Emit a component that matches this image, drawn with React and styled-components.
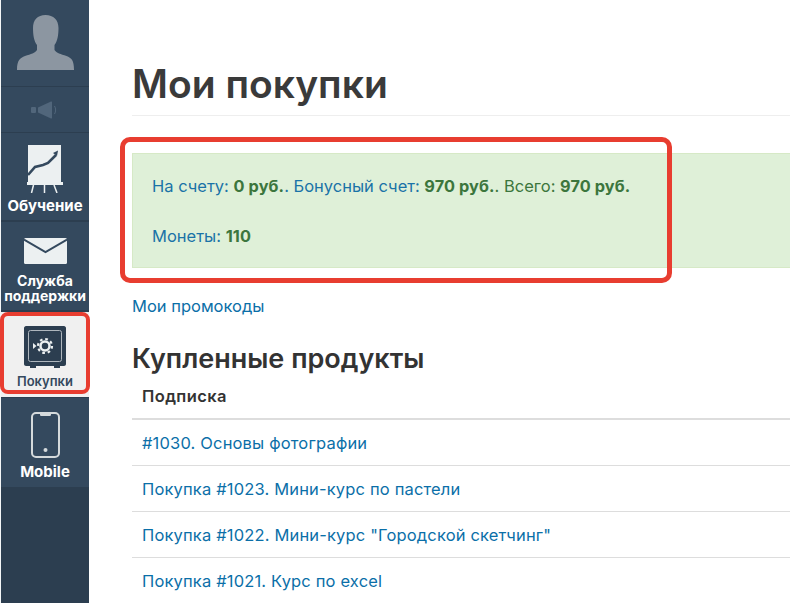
import React from "react";
import styled, { createGlobalStyle } from "styled-components";

const Global = createGlobalStyle`
  html, body { margin: 0; padding: 0; background: #fff; overflow: hidden; }
  body { font-family: Inter, "Noto Sans", sans-serif; font-size: 16px; color: #333; }
`;

const Page = styled.div`
  display: flex;
  width: 790px;
  height: 603px;
  overflow: hidden;
`;

const Sidebar = styled.nav`
  width: 89px;
  flex: none;
  box-sizing: border-box;
  border-left: 1px solid #f4f6f7;
  background: #2c3e50;
  display: flex;
  flex-direction: column;
`;

const AvatarCell = styled.div`
  height: 87px;
  background: #34495e;
  border-bottom: 1px solid #2c3e50;
  display: flex;
  align-items: flex-start;
  justify-content: center;
  padding-top: 15px;
  box-sizing: border-box;
`;

const SoundCell = styled.div`
  height: 46px;
  background: #34495e;
  border-bottom: 1px solid #2c3e50;
  box-sizing: border-box;
  display: flex;
  align-items: center;
  justify-content: center;
`;

const NavItem = styled.a`
  height: ${(p) => p.$h}px;
  margin-bottom: ${(p) => p.$mb || 0}px;
  background: ${(p) => (p.$active ? "#f0f0f0" : "#34495e")};
  color: ${(p) => (p.$active ? "#34495e" : "#fff")};
  display: flex;
  flex-direction: column;
  align-items: center;
  padding-top: ${(p) => p.$pt}px;
  box-sizing: border-box;
  font-weight: ${(p) => (p.$active ? 600 : 700)};
  line-height: 15px;
  text-align: center;
`;

const NavIcon = styled.svg`
  display: block;
  flex: none;
`;

const NavLabel = styled.span`
  margin-top: ${(p) => p.$mt}px;
  font-size: ${(p) => p.$fs || 14}px;
  white-space: nowrap;
`;

const Main = styled.main`
  flex: 1;
  min-width: 0;
  padding: 59px 0 0 43px;
`;

const Title = styled.h1`
  margin: 0;
  font-size: 39px;
  line-height: 50px;
  font-weight: 600;
  color: #3a3a3a;
  padding-bottom: 6px;
  border-bottom: 1px solid #eee;
`;

const Alert = styled.div`
  margin-top: 37px;
  background: #dff0d8;
  border: 1px solid #d6e9c6;
  border-right: 0;
  height: 115px;
  box-sizing: border-box;
  padding: 20px 19px;
  font-size: 16.5px;
  line-height: 24px;
  color: #3c763d;
`;

const AlertLine = styled.p`
  margin: 0 0 26px;
  white-space: nowrap;
`;

const Blue = styled.span`
  color: #1a73a7;
`;

const Strong = styled.b`
  font-size: 16.3px;
  letter-spacing: 0.1px;
  font-weight: 700;
`;

const Promo = styled.a`
  display: block;
  margin-top: 26px;
  font-size: 16.5px;
  line-height: 24px;
  color: #0b6fa8;
`;

const Heading = styled.h2`
  margin: 24px 0 0;
  font-size: 27px;
  line-height: 34px;
  font-weight: 600;
  color: #333;
`;

const HeadRow = styled.div`
  height: 44px;
  padding: 0 10px 2px;
  display: flex;
  align-items: center;
  font-weight: 600;
  font-size: 16.5px;
  letter-spacing: 0.4px;
  color: #333;
  border-bottom: 2px solid #ddd;
  box-sizing: border-box;
`;

const Row = styled.a`
  height: 46px;
  padding: 0 10px;
  display: flex;
  align-items: center;
  font-size: 16.5px;
  letter-spacing: 0.16px;
  color: #0b6fa8;
  border-bottom: 1px solid #ddd;
  box-sizing: border-box;
`;

const Callout = styled.div`
  position: absolute;
  box-sizing: border-box;
  border: ${(p) => p.$b}px solid #e83d30;
  border-radius: ${(p) => p.$r}px;
  left: ${(p) => p.$x}px;
  top: ${(p) => p.$y}px;
  width: ${(p) => p.$w}px;
  height: ${(p) => p.$h}px;
  pointer-events: none;
`;

const Avatar = () => (
  <NavIcon width="57" height="55" viewBox="0 0 57 55">
    <path fill="#8c96a1" d="M28.500 0c8 0 13 5 13 13 0 7-1 13-4 17v5c2 3 6 4 12 6 5 2 7.500 4 7.500 14H0c0-10 3-12 8-14 6-2 10-3 12-6v-5c-3-4-4-10-4-17C16 5 20.500 0 28.500 0z" />
  </NavIcon>
);

const Speaker = () => (
  <NavIcon width="28" height="18" viewBox="0 0 28 18" fill="#51667b">
    <rect x="0" y="6" width="5" height="6" rx="1" />
    <path d="M7 6.500L20 0.500c1 0 1 .3 1 1v15c0 .7 0 1-1 1L7 11.500z" />
    <path d="M23.500 5c1.500 2.500 1.500 5.500 0 8" fill="none" stroke="#51667b" strokeWidth="1" />
  </NavIcon>
);

const Chart = () => (
  <NavIcon width="36" height="48" viewBox="0 0 36 48">
    <rect x="1" y="0" width="33" height="37" fill="#ecf0f1" />
    <path d="M1 30l7-8 8-2 5-2 8-8" fill="none" stroke="#34495e" strokeWidth="2.600" />
    <path d="M26 8l5-2.500-1 5.500z" fill="#34495e" />
    <rect x="0" y="37" width="36" height="3" fill="#ecf0f1" />
    <path d="M6.500 40l-2 8M17.500 40v8M27 40l3 8" stroke="#ecf0f1" strokeWidth="1.500" fill="none" />
  </NavIcon>
);

const Mail = () => (
  <NavIcon width="43" height="26" viewBox="0 0 43 26">
    <rect x="0" y="0" width="43" height="26" rx="1.500" fill="#ecf0f1" />
    <path d="M0 1.500L21.500 14 43 1.500" fill="none" stroke="#34495e" strokeWidth="2" />
  </NavIcon>
);

const Safe = () => (
  <NavIcon width="42" height="42" viewBox="0 0 42 42">
    <path fill="#2c3e50" d="M2 0h38c1 0 2 1 2 2v36c0 1-1 2-2 2h-4v2h-6v-2H12v2H6v-2H2c-1 0-2-1-2-2V2C0 1 1 0 2 0z" />
    <rect x="4.500" y="4.500" width="33" height="31" rx="2" fill="none" stroke="#aeb6bd" strokeWidth="1" />
    <circle cx="21" cy="20" r="4.500" fill="none" stroke="#ecf0f1" strokeWidth="2.500" />
    <circle cx="21" cy="20" r="7" fill="none" stroke="#ecf0f1" strokeWidth="2.200" strokeDasharray="2.700 2.800" />
    <path d="M9 17l3.500 3L9 23z" fill="#ecf0f1" />
  </NavIcon>
);

const Phone = () => (
  <NavIcon width="29" height="46" viewBox="0 0 29 46" fill="none">
    <rect x="1" y="1" width="27" height="44" rx="4" stroke="#d5dadc" strokeWidth="2" />
    <path d="M9 1h11v1.500c0 1-.6 1.500-1.500 1.500h-8C9.600 4 9 3.500 9 2.500z" fill="#d5dadc" />
    <circle cx="14.500" cy="38" r="2" fill="#d5dadc" />
  </NavIcon>
);

const rows = [
  "#1030. Основы фотографии",
  "Покупка #1023. Мини-курс по пастели",
  'Покупка #1022. Мини-курс "Городской скетчинг"',
  "Покупка #1021. Курс по excel",
];

export default function App() {
  return (
    <Page>
      <Global />
      <Sidebar>
        <AvatarCell><Avatar /></AvatarCell>
        <SoundCell><Speaker /></SoundCell>
        <NavItem $h={87} $pt={12} $mb={2}><Chart /><NavLabel $mt={5} $fs={15}>Обучение</NavLabel></NavItem>
        <NavItem $h={88} $pt={16} $mb={2}><Mail /><NavLabel $mt={9}>Служба<br />поддержки</NavLabel></NavItem>
        <NavItem $h={85} $pt={14} $mb={1} $active><Safe /><NavLabel $mt={6} $fs={13}>Покупки</NavLabel></NavItem>
        <NavItem $h={89} $pt={14}><Phone /><NavLabel $mt={6} $fs={15}>Mobile</NavLabel></NavItem>
      </Sidebar>
      <Main>
        <Title>Мои покупки</Title>
        <Alert>
          <AlertLine>
            <Blue>На счету: </Blue><Strong>0 руб.</Strong><Blue>. Бонусный счет: </Blue><Strong>970 руб.</Strong>. Всего: <Strong>970 руб.</Strong>
          </AlertLine>
          <AlertLine><Blue>Монеты: </Blue><Strong>110</Strong></AlertLine>
        </Alert>
        <Promo>Мои промокоды</Promo>
        <Heading>Купленные продукты</Heading>
        <div>
          <HeadRow>Подписка</HeadRow>
          {rows.map((r) => <Row key={r}>{r}</Row>)}
        </div>
      </Main>
      <Callout $x={120} $y={137} $w={552} $h={146} $b={5} $r={10} />
      <Callout $x={0} $y={312} $w={90} $h={82} $b={4} $r={8} />
    </Page>
  );
}
